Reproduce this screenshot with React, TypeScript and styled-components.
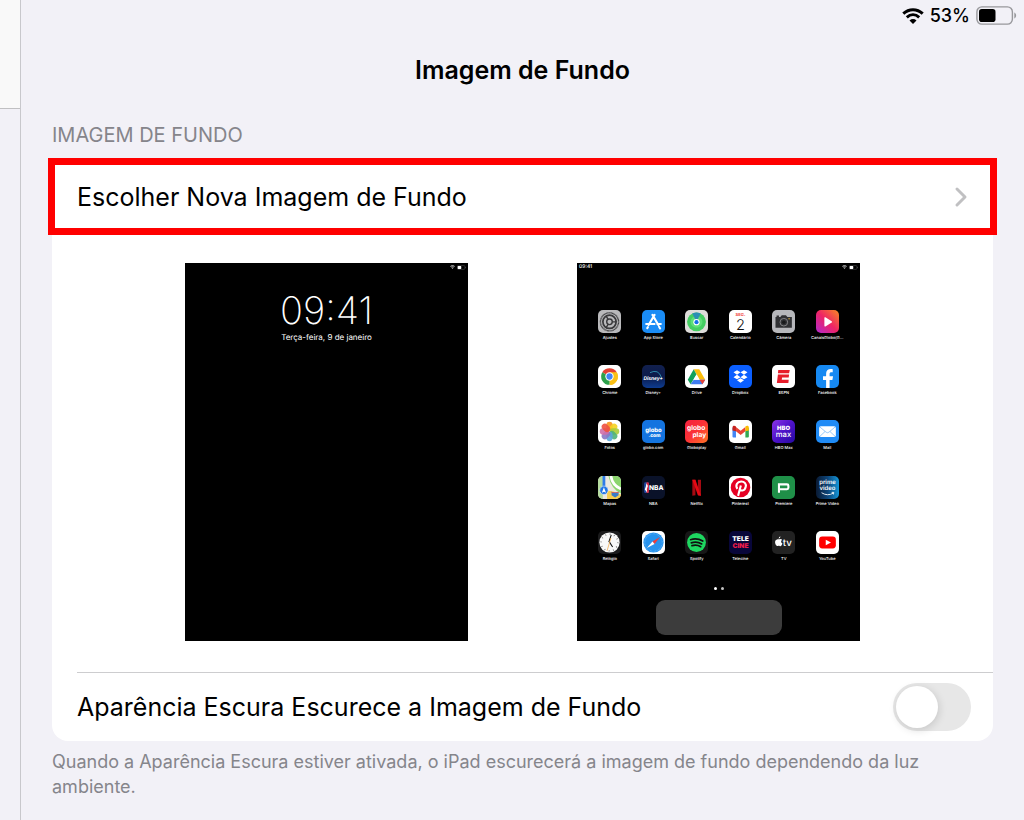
import React from "react";
import styled, { createGlobalStyle } from "styled-components";

const GlobalStyle = createGlobalStyle`
  *, *::before, *::after { box-sizing: border-box; }
  body {
    margin: 0;
    background: #f2f1f7;
    color: #000;
    font-family: Inter, "Liberation Sans", sans-serif;
  }
`;

const Page = styled.div`
  display: flex;
  min-height: 100vh;
`;

const Sidebar = styled.aside`
  flex: 0 0 21px;
  border-right: 1px solid #c8c8cc;
`;

const SidebarHeader = styled.div`
  height: 109px;
  background: #f9f9f9;
  border-bottom: 1px solid #c0c0c2;
`;

const Main = styled.main`
  flex: 1;
  min-width: 0;
`;

const StatusBar = styled.div`
  display: flex;
  align-items: center;
  justify-content: flex-end;
  gap: 6px;
  height: 31px;
  padding-right: 7px;
  font-size: 18px;
  font-weight: 500;
`;

const Title = styled.h1`
  margin: 0;
  padding: 0 31px;
  font-size: 25px;
  font-weight: 600;
  line-height: 78px;
  text-align: center;
`;

const Section = styled.section`
  padding: 14px 31px 20px;
`;

const SectionLabel = styled.h2`
  margin: 0 0 11px;
  color: #85858b;
  font-size: 20px;
  font-weight: 400;
  line-height: 24px;
  text-transform: uppercase;
`;

const Card = styled.div`
  background: #fff;
  border-radius: 0 0 16px 16px;
`;

const ChooseButton = styled.button`
  display: flex;
  align-items: center;
  justify-content: space-between;
  width: calc(100% + 8px);
  height: 77px;
  margin: 0 -4px;
  padding: 0 22px;
  border: 7px solid #ff0000;
  background: #fff;
  color: #000;
  font: inherit;
  font-size: 25px;
  text-align: left;
`;

const Previews = styled.div`
  display: flex;
  flex-wrap: wrap;
  justify-content: center;
  gap: 28px 109px;
  padding: 28px 0 31px;
`;

const Screen = styled.div`
  display: flex;
  flex-direction: column;
  width: 283px;
  height: 378px;
  background: #000;
  color: #fff;
  text-rendering: geometricPrecision;
`;

const ScreenStatus = styled.div`
  display: flex;
  align-items: center;
  justify-content: space-between;
  height: 8px;
  padding: 0 2px;
  font-size: 5px;
  font-weight: 500;
`;

const LockTime = styled.time`
  margin-top: 16px;
  font-size: 38px;
  font-weight: 200;
  line-height: 48px;
  text-align: center;
`;

const LockDate = styled.div`
  font-size: 8px;
  line-height: 4px;
  text-align: center;
`;

const AppGrid = styled.ul`
  display: grid;
  grid-template-columns: repeat(6, 1fr);
  grid-auto-rows: 1fr;
  height: 276px;
  margin: 39px 0 0;
  padding: 0 11px;
  list-style: none;
`;

const AppItem = styled.li`
  display: flex;
  flex-direction: column;
  align-items: center;
  gap: 2px;
  min-width: 0;
  font-size: 4px;
  font-weight: 500;
  line-height: 6px;
  white-space: nowrap;
`;

const AppIcon = styled.svg`
  flex: none;
  width: 23px;
  height: 23px;
  border-radius: 5px;
`;

const Dots = styled.div`
  display: flex;
  justify-content: center;
  gap: 4px;
  padding: 1px 0 10px;
`;

const Dot = styled.span<{ $active?: boolean }>`
  width: 3px;
  height: 3px;
  border-radius: 50%;
  background: ${(p) => (p.$active ? "#fff" : "#c4c4c4")};
`;

const Dock = styled.div`
  align-self: center;
  width: 126px;
  height: 35px;
  border-radius: 9px;
  background: #3c3c3c;
`;

const ToggleRow = styled.label`
  display: flex;
  align-items: center;
  justify-content: space-between;
  height: 69px;
  margin-left: 25px;
  padding-right: 22px;
  border-top: 1px solid #cdcdcf;
  font-size: 25px;
`;

const Switch = styled.input`
  appearance: none;
  flex: none;
  width: 78px;
  height: 48px;
  margin: 0;
  padding: 3px;
  border-radius: 24px;
  background: #e7e7e7;

  &::before {
    content: "";
    display: block;
    width: 42px;
    height: 42px;
    border-radius: 50%;
    background: #fff;
    box-shadow: 1px 2px 8px rgba(0, 0, 0, 0.14);
  }

  &:checked {
    background: #34c759;
  }

  &:checked::before {
    margin-left: auto;
  }
`;

const Footnote = styled.p`
  margin: 8px 0 0;
  color: #85858b;
  font-size: 18px;
  line-height: 25px;
`;

const Wifi = ({ width, height }: { width: number; height: number }) => (
  <svg width={width} height={height} viewBox="0 0 22 16" fill="none" stroke="currentColor" strokeWidth="3" aria-hidden="true">
    <path d="M1.3 5.6C7 .3 15 .3 20.700 5.600" />
    <path d="M4.800 9.300c3.700-3.300 8.700-3.300 12.400 0" />
    <path d="M11 16l-3.500-3.600c2-1.800 5-1.800 7 0z" fill="currentColor" stroke="none" />
  </svg>
);

const Battery = ({ width, height }: { width: number; height: number }) => (
  <svg width={width} height={height} viewBox="0 0 41 19" aria-hidden="true">
    <rect x=".9" y=".9" width="35.500" height="17.200" rx="5" fill="none" stroke="#98989c" strokeWidth="1.400" />
    <rect x="3" y="3" width="16.500" height="13" rx="2.800" fill="currentColor" />
    <path d="M38.300 6.500c2.400 1 2.400 5 0 6z" fill="#98989c" />
  </svg>
);

const word = {
  textAnchor: "middle" as const,
  fontFamily: "Inter, sans-serif",
  fontWeight: 800,
  fill: "#fff",
};

const petals = ["#f7941d", "#f4d21f", "#a8cc3a", "#4fb27a", "#5aa6dc", "#8a78c4", "#cf6fa8", "#ee5040"];

const apps: { name: string; bg: string; art: React.ReactNode }[] = [
  {
    name: "Ajustes",
    bg: "#b9b9bb",
    art: (
      <g fill="none" stroke="#39393b">
        <circle cx="33" cy="34" r="26" strokeWidth="4" strokeDasharray="2.500 1" />
        <circle cx="33" cy="34" r="19" strokeWidth="5" />
        <circle cx="33" cy="34" r="8" strokeWidth="4" />
        <path d="M41 34h11M29 27l-6-10M29 41l-6 10" strokeWidth="4" />
      </g>
    ),
  },
  {
    name: "App Store",
    bg: "#1a8cf5",
    art: (
      <g stroke="#fff" strokeWidth="6" strokeLinecap="round">
        <path d="M36 14L19 43M30 14l17 29M12 40h24M44 40h10M17 49l-2 3M49 48l3 5" />
      </g>
    ),
  },
  {
    name: "Buscar",
    bg: "#dedcda",
    art: (
      <>
        <circle cx="33" cy="34" r="27" fill="#44ce62" />
        <circle cx="33" cy="34" r="17" fill="#5fdf78" />
        <path d="M33 34L21 10q12-5 24 0z" fill="#2a8fb4" />
        <circle cx="33" cy="35" r="9" fill="#fff" />
        <circle cx="33" cy="35" r="6" fill="#1572e8" />
      </>
    ),
  },
  {
    name: "Calendário",
    bg: "#fff",
    art: (
      <>
        <text {...word} x="33" y="17" fontSize="12" fontWeight={700} fill="#f0443b">SEG.</text>
        <text {...word} x="33" y="56" fontSize="42" fontWeight={300} fill="#111">2</text>
      </>
    ),
  },
  {
    name: "Câmera",
    bg: "#b6b7bb",
    art: (
      <>
        <path d="M10 20h14l4-5h12l4 5h13v31H10zM13 16h7v4h-7z" fill="#303134" />
        <circle cx="34" cy="35" r="11" fill="#303134" stroke="#8c8c90" strokeWidth="2.500" />
        <circle cx="34" cy="35" r="5" fill="#18191b" />
        <circle cx="49" cy="25" r="2" fill="#e5b53a" />
      </>
    ),
  },
  {
    name: "CanaisGlobo(G...",
    bg: "url(#canais)",
    art: <path d="M24 22.500q0-3 3-1.500l18 11q3 2 0 4L27 47q-3 1-3-2z" fill="#fff" />,
  },
  {
    name: "Chrome",
    bg: "#fff",
    art: (
      <>
        <path d="M33 33L12.200 21A24 24 0 0 1 53.800 21z" fill="#e34133" />
        <path d="M33 33L53.800 21A24 24 0 0 1 33 57z" fill="#fbc116" />
        <path d="M33 33v24A24 24 0 0 1 12.200 21z" fill="#2da14c" />
        <path d="M33 21h20.800A24 24 0 0 1 33 57l11-18z" fill="#fbc116" />
        <circle cx="33" cy="33" r="12" fill="#fff" />
        <circle cx="33" cy="33" r="9" fill="#4285f4" />
      </>
    ),
  },
  {
    name: "Disney+",
    bg: "url(#disney)",
    art: (
      <>
        <path d="M23 22q24-12 33 14" fill="none" stroke="#3bb5d1" strokeWidth="2" />
        <text {...word} x="32" y="44" fontSize="14" fontStyle="italic" fontWeight={700}>Disney+</text>
      </>
    ),
  },
  {
    name: "Drive",
    bg: "#fff",
    art: (
      <>
        <path d="M25 12h16l17 30H42z" fill="#fcbd0b" />
        <path d="M25 12l8 15-17 28L8 42z" fill="#13a15a" />
        <path d="M25 42h33l-8 13H16z" fill="#3f7df0" />
        <path d="M42 42h16l-8 13z" fill="#e84335" />
        <path d="M33 27l9 15H24z" fill="#fff" />
      </>
    ),
  },
  {
    name: "Dropbox",
    bg: "#0b5fff",
    art: <path d="M23 15l10 6-10 7-10-7zM43 15l10 6-10 7-10-7zM23 28l10 7-10 6-10-6zM43 28l10 7-10 6-10-6zM33 38l10 6-10 7-10-7z" fill="#fff" />,
  },
  {
    name: "ESPN",
    bg: "#fff",
    art: (
      <g fill="#e71d2b">
        <path d="M18 14h33l-2 10H17z" />
        <path d="M17 27h32l-1 9H29l-1 6h20l-1 10H14z" />
      </g>
    ),
  },
  {
    name: "Facebook",
    bg: "#1689f2",
    art: <path d="M29 66V43h-9V32h9v-7c0-10 6-15 19-13v9c-7-1-9 1-9 5v6h10l-2 11h-8v23z" fill="#fff" />,
  },
  {
    name: "Fotos",
    bg: "#fff",
    art: (
      <>
        {petals.map((color, i) => (
          <rect key={color} x="24" y="5" width="18" height="27" rx="9" fill={color} opacity=".9" transform={`rotate(${i * 45} 33 33)`} />
        ))}
      </>
    ),
  },
  {
    name: "globo.com",
    bg: "#1474e0",
    art: (
      <>
        <text {...word} x="33" y="34" fontSize="17">globo</text>
        <text {...word} x="36" y="49" fontSize="14">.com</text>
      </>
    ),
  },
  {
    name: "Globoplay",
    bg: "url(#globoplay)",
    art: (
      <>
        <text {...word} x="32" y="30" fontSize="19" fontWeight={700}>globo</text>
        <text {...word} x="41" y="48" fontSize="19" fontWeight={700}>play</text>
      </>
    ),
  },
  {
    name: "Gmail",
    bg: "#fff",
    art: (
      <>
        <path d="M10 22l10 7v21h-7q-3 0-3-3z" fill="#4285f4" />
        <path d="M57 22l-10 7v21h7q3 0 3-3z" fill="#34a853" />
        <path d="M20 20l13.500 11L47 20v12L33.500 43 20 32z" fill="#ea4335" />
        <path d="M10 30v-8c0-6 6-7 10-3v13z" fill="#c5221f" />
        <path d="M57 30v-8c0-6-6-7-10-3v13z" fill="#fbbc04" />
      </>
    ),
  },
  {
    name: "HBO Max",
    bg: "url(#hbo)",
    art: (
      <>
        <text {...word} x="33" y="29" fontSize="17" fontWeight={900}>HBO</text>
        <text {...word} x="33" y="48" fontSize="22" fontWeight={500}>max</text>
      </>
    ),
  },
  {
    name: "Mail",
    bg: "#1f8bf6",
    art: (
      <>
        <rect x="9" y="18" width="48" height="31" rx="5" fill="#fff" />
        <path d="M11 20l18 15q4 3 8 0l18-15M11 47l15-14M55 47L40 33" fill="none" stroke="#6db2f7" strokeWidth="2" />
      </>
    ),
  },
  {
    name: "Mapas",
    bg: "#ece8df",
    art: (
      <>
        <path d="M30 0h36v50Q38 38 30 0z" fill="#8bd46e" />
        <path d="M37 0q4 27 29 37" fill="none" stroke="#fff" strokeWidth="8" />
        <path d="M0 0h14v66H0z" fill="#b5db9e" />
        <path d="M17 0v50" stroke="#2f7ce8" strokeWidth="8" />
        <path d="M26 66V42q20 0 40 12v12z" fill="#f6cd4f" />
        <circle cx="17" cy="41" r="12" fill="#2176e5" stroke="#fff" strokeWidth="1.500" />
        <path d="M17 32l6 16-6-3-6 3z" fill="#fff" />
        <path d="M39 45q10 4 20 0v10l-10 7-10-7z" fill="#3a7bc8" />
        <path d="M39 45q10 4 20 0v4H39z" fill="#e75b4c" />
      </>
    ),
  },
  {
    name: "NBA",
    bg: "#0a1229",
    art: (
      <>
        <rect x="6" y="18" width="14" height="31" rx="4" fill="#1d48a0" />
        <path d="M13 18h3q4 0 4 4v23q0 4-4 4h-3z" fill="#d3263b" />
        <path d="M13 21l4 8-3 8 1 10-7-8 3-9z" fill="#fff" />
        <text {...word} x="41" y="41" fontSize="19">NBA</text>
      </>
    ),
  },
  {
    name: "Netflix",
    bg: "#000",
    art: (
      <>
        <path d="M21 11h9v44l-9 2zM37 11h9v46l-9-2z" fill="#a60a12" />
        <path d="M21 11h9l16 46-9-2z" fill="#e50914" />
      </>
    ),
  },
  {
    name: "Pinterest",
    bg: "#fff",
    art: (
      <>
        <circle cx="33" cy="33" r="28" fill="#e60023" />
        <path d="M24 37c-7-12 0-21 11-21 10 0 15 7 13 15-3 14-16 12-17 6M34 27L26 57" fill="none" stroke="#fff" strokeWidth="6" />
      </>
    ),
  },
  {
    name: "Premiere",
    bg: "#1f9048",
    art: <path d="M20 48V24h23q4 0 4 4v6q0 4-4 4H20" fill="none" stroke="#fff" strokeWidth="6" />,
  },
  {
    name: "Prime Video",
    bg: "url(#prime)",
    art: (
      <>
        <text {...word} x="33" y="23" fontSize="17" fontWeight={600}>prime</text>
        <text {...word} x="33" y="41" fontSize="17" fontWeight={600}>video</text>
        <path d="M16 48q17 11 34 1M45 47l6 0-1 6" fill="none" stroke="#fff" strokeWidth="2.500" />
      </>
    ),
  },
  {
    name: "Relógio",
    bg: "#1b1b1c",
    art: (
      <>
        <circle cx="33" cy="33" r="29" fill="#f8f8f8" />
        <circle cx="33" cy="33" r="24" fill="none" stroke="#555" strokeWidth="4" strokeDasharray="2 10.560" />
        <path d="M31 32l7-21M33 32l9 14" stroke="#111" strokeWidth="3" />
        <path d="M37 20L26 57" stroke="#f0a33a" strokeWidth="2" />
      </>
    ),
  },
  {
    name: "Safari",
    bg: "#fff",
    art: (
      <>
        <circle cx="33" cy="33" r="29" fill="#2793ee" />
        <circle cx="33" cy="33" r="25" fill="none" stroke="#8fc9f8" strokeWidth="3" strokeDasharray="1 3" />
        <path d="M52 17L36 37l-6-7z" fill="#f23d3a" />
        <path d="M14 49l16-19 6 7z" fill="#fff" />
      </>
    ),
  },
  {
    name: "Spotify",
    bg: "#171717",
    art: (
      <>
        <circle cx="33" cy="33" r="27" fill="#1ed760" />
        <path d="M16 25q18-6 35 4M18 34q16-5 30 3M20 42q14-4 25 3" fill="none" stroke="#101010" strokeWidth="5" strokeLinecap="round" />
      </>
    ),
  },
  {
    name: "Telecine",
    bg: "#08063a",
    art: (
      <>
        <text {...word} x="33" y="30" fontSize="19" fontWeight={900}>TELE</text>
        <text {...word} x="33" y="49" fontSize="19" fontWeight={900} fill="#ee1c4a">CINE</text>
      </>
    ),
  },
  {
    name: "TV",
    bg: "#222",
    art: (
      <>
        <path d="M20 24c3-2 7-2 9 1-4 3-4 8 1 11-2 6-5 9-8 7-2-1-3-1-5 0-5 1-9-7-8-13 1-5 6-8 11-6zM19 22q0-5 5-7 1 5-5 7z" fill="#fff" />
        <text {...word} x="44" y="43" fontSize="28" fontWeight={500}>tv</text>
      </>
    ),
  },
  {
    name: "YouTube",
    bg: "#fff",
    art: (
      <>
        <rect x="9" y="16" width="48" height="34" rx="9" fill="#ff0000" />
        <path d="M28 25l15 8-15 8z" fill="#fff" />
      </>
    ),
  },
];

const gradients = [
  { id: "canais", stops: ["#f98a22", "#ee2466", "#b12ad0"], x1: "1", y1: "0", x2: "0", y2: "1" },
  { id: "disney", stops: ["#12204e", "#0b1b4b", "#0d3b8f"], x1: "0", y1: "0", x2: "0", y2: "1" },
  { id: "globoplay", stops: ["#f3213f", "#fb3336", "#ff7426"], x1: "0", y1: "0", x2: "1", y2: "1" },
  { id: "hbo", stops: ["#8b35e8", "#4d12c9", "#2609a0"], x1: "0", y1: "0", x2: "1", y2: "1" },
  { id: "prime", stops: ["#0a1a33", "#0d4478", "#1496d8"], x1: "0", y1: "0", x2: "1", y2: "0" },
];

const AppTile = ({ name, bg, art }: { name: string; bg: string; art: React.ReactNode }) => {
  const gradient = gradients.find((g) => bg === `url(#${g.id})`);
  return (
    <AppItem>
      <AppIcon viewBox="0 0 66 66" aria-hidden="true">
        {gradient && (
          <defs>
            <linearGradient id={gradient.id} x1={gradient.x1} y1={gradient.y1} x2={gradient.x2} y2={gradient.y2}>
              {gradient.stops.map((color, i) => (
                <stop key={color} offset={i / 2} stopColor={color} />
              ))}
            </linearGradient>
          </defs>
        )}
        <rect width="66" height="66" fill={bg} />
        {art}
      </AppIcon>
      <span>{name}</span>
    </AppItem>
  );
};

const MiniIndicators = styled.span`
  display: flex;
  align-items: center;
  gap: 2px;
  margin-left: auto;
`;

const MiniStatus = ({ time }: { time?: string }) => (
  <ScreenStatus>
    {time && <span>{time}</span>}
    <MiniIndicators>
      <Wifi width={5} height={4} />
      <Battery width={9} height={5} />
    </MiniIndicators>
  </ScreenStatus>
);

export default function App() {
  return (
    <>
      <GlobalStyle />
      <Page>
        <Sidebar>
          <SidebarHeader />
        </Sidebar>
        <Main>
          <StatusBar>
            <Wifi width={22} height={16} />
            <span>53%</span>
            <Battery width={41} height={19} />
          </StatusBar>
          <Title>Imagem de Fundo</Title>
          <Section>
            <SectionLabel>Imagem de Fundo</SectionLabel>
            <Card>
              <ChooseButton type="button">
                Escolher Nova Imagem de Fundo
                <svg width="14" height="22" viewBox="0 0 14 22" fill="none" stroke="#c0c0c2" strokeWidth="3" strokeLinecap="round" strokeLinejoin="round" aria-hidden="true">
                  <path d="M3 3l8 8-8 8" />
                </svg>
              </ChooseButton>
              <Previews>
                <Screen>
                  <MiniStatus />
                  <LockTime>09:41</LockTime>
                  <LockDate>Terça-feira, 9 de janeiro</LockDate>
                </Screen>
                <Screen>
                  <MiniStatus time="09:41" />
                  <AppGrid>
                    {apps.map((app) => (
                      <AppTile key={app.name} {...app} />
                    ))}
                  </AppGrid>
                  <Dots>
                    <Dot $active />
                    <Dot />
                  </Dots>
                  <Dock />
                </Screen>
              </Previews>
              <ToggleRow>
                Aparência Escura Escurece a Imagem de Fundo
                <Switch type="checkbox" role="switch" />
              </ToggleRow>
            </Card>
            <Footnote>
              Quando a Aparência Escura estiver ativada, o iPad escurecerá a imagem de fundo dependendo da luz ambiente.
            </Footnote>
          </Section>
        </Main>
      </Page>
    </>
  );
}
